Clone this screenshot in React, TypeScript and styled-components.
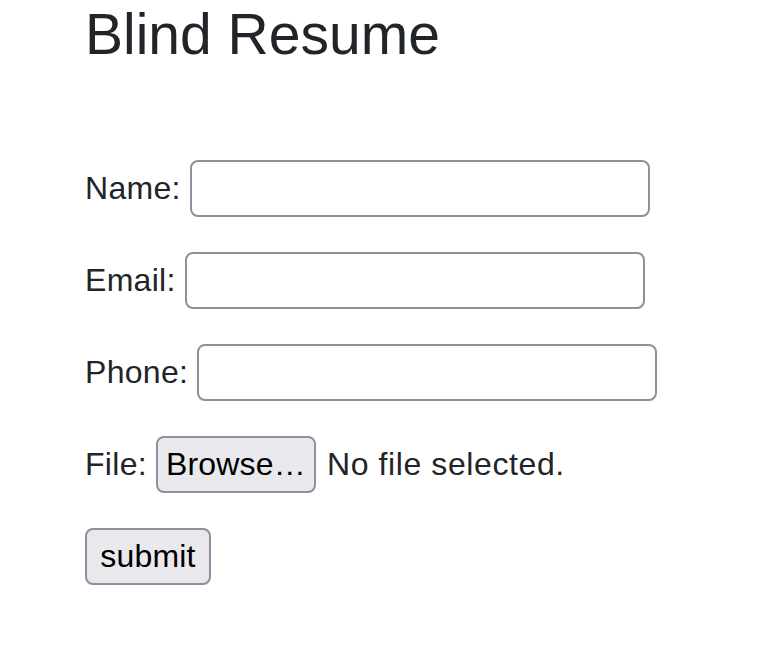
import styled, { createGlobalStyle } from "styled-components"

const GlobalStyle = createGlobalStyle`
    html, body {
        margin: 0;
        padding: 0;
        background: #ffffff;
    }
    body {
        font-family: "Liberation Sans", Arial, sans-serif;
        color: #212529;
    }
`

const Page = styled.div`
    display: flex;
    flex-direction: column;
    padding: 3px 0 0 85px;
`

const Heading = styled.h1`
    margin: 0;
    font-size: 57px;
    font-weight: 400;
    line-height: 1.1;
    color: #212529;
`

const Form = styled.form`
    display: flex;
    flex-direction: column;
    gap: 35px;
    margin-top: 94px;
`

const Row = styled.div`
    display: flex;
    align-items: center;
    gap: 9px;
    height: 57px;
`

const Label = styled.label`
    font-size: 32px;
    letter-spacing: 0.3px;
    color: #212529;
`

const TextBox = styled.input`
    box-sizing: border-box;
    width: 460px;
    height: 57px;
    border: 2px solid #8f8f9d;
    border-radius: 8px;
    background: #ffffff;
    padding: 0 8px;
    font-size: 26px;
    font-family: inherit;
    outline: none;
`

const Button = styled.button<{ $w: number }>`
    box-sizing: border-box;
    width: ${(p) => p.$w}px;
    height: 57px;
    border: 2px solid #8f8f9d;
    border-radius: 8px;
    background: #e9e9ed;
    color: #000000;
    font-family: inherit;
    font-size: 32px;
    letter-spacing: 0.2px;
    padding: 0;
    cursor: pointer;
`

const FileName = styled.span`
    margin-left: 2px;
    font-size: 32px;
    letter-spacing: 0.6px;
    color: #212529;
`

const fields = ["Name", "Email", "Phone"]

const App = () => {
    return (
        <>
            <GlobalStyle />
            <Page>
                <Heading>Blind Resume</Heading>
                <Form onSubmit={(e) => e.preventDefault()}>
                    {fields.map((f) => (
                        <Row key={f}>
                            <Label htmlFor={f}>{f}:</Label>
                            <TextBox id={f} type="text" />
                        </Row>
                    ))}
                    <Row>
                        <Label>File:</Label>
                        <Button type="button" $w={160}>Browse…</Button>
                        <FileName>No file selected.</FileName>
                    </Row>
                    <Row>
                        <Button type="submit" $w={126}>submit</Button>
                    </Row>
                </Form>
            </Page>
        </>
    )
}

export default App
